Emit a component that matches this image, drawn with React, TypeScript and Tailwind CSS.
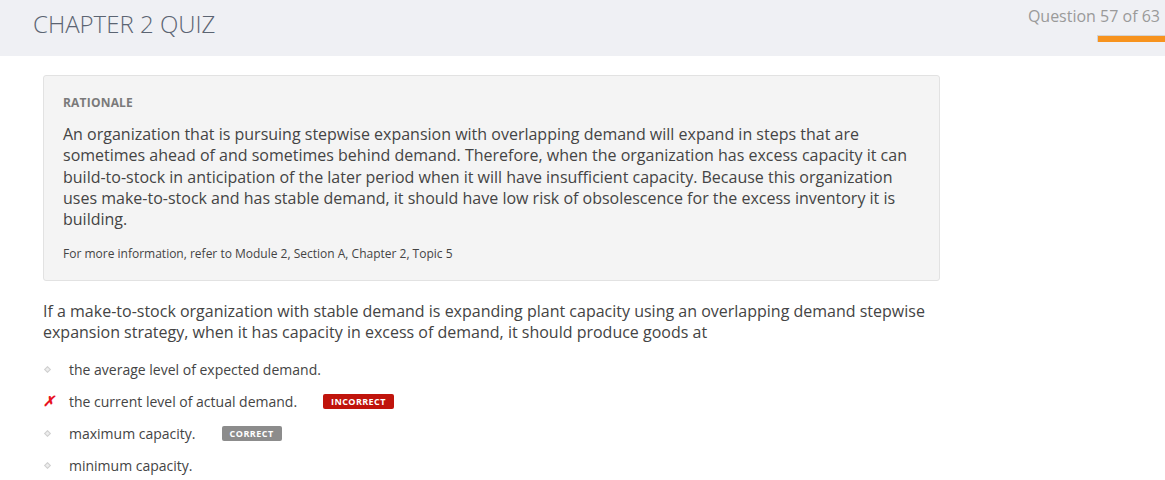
import React from "react";

const options = [
  { text: "the average level of expected demand.", mark: "none" },
  { text: "the current level of actual demand.", mark: "incorrect" },
  { text: "maximum capacity.", mark: "correct" },
  { text: "minimum capacity.", mark: "none" },
];

const App = () => {
  return (
    <div className="w-[1165px] h-[480px] bg-white overflow-hidden font-['Open_Sans',sans-serif]">
      <div className="h-[56px] bg-[#eff0f4] flex justify-between">
        <div className="pl-[33px] pt-[6px] text-[24px] font-light text-[#5b6472]">
          CHAPTER 2 QUIZ
        </div>
        <div className="flex flex-col items-end pt-[4px]">
          <div className="pr-[5px] text-[16px] text-[#9a9a9a]">Question 57 of 63</div>
          <div className="mt-[7px] w-[68px] h-[7px] bg-[#f7931e] border-t border-l border-[#d4d4d4]"></div>
        </div>
      </div>

      <div className="pl-[43px] pt-[19px] w-[940px]">
        <div className="bg-[#f4f4f4] border border-[#e2e2e2] rounded-[3px] px-[19px] pt-[18px] pb-[17px]">
          <div className="text-[12px] font-bold text-[#7a7a7a] tracking-[0.2px]">RATIONALE</div>
          <p className="mt-[12px] text-[16px] leading-[21.3px] text-[#444]">
            An organization that is pursuing stepwise expansion with overlapping demand will expand in steps that are
            sometimes ahead of and sometimes behind demand. Therefore, when the organization has excess capacity it can
            build-to-stock in anticipation of the later period when it will have insufficient capacity. Because this organization
            uses make-to-stock and has stable demand, it should have low risk of obsolescence for the excess inventory it is
            building.
          </p>
          <p className="mt-[15px] text-[12px] text-[#444]">
            For more information, refer to Module 2, Section A, Chapter 2, Topic 5
          </p>
        </div>

        <p className="mt-[20px] text-[16px] leading-[21px] text-[#444] w-[900px]">
          If a make-to-stock organization with stable demand is expanding plant capacity using an overlapping demand stepwise
          expansion strategy, when it has capacity in excess of demand, it should produce goods at
        </p>

        <div className="mt-[10px] flex flex-col">
          {options.map((o, i) => (
            <div key={i} className="h-[32px] flex items-center">
              <div className="w-[26px] flex items-center">
                {o.mark === "incorrect" ? (
                  <span className="text-[#e8141e] text-[14px] font-bold italic leading-none">✗</span>
                ) : (
                  <span className="ml-[2px] w-[5px] h-[5px] rotate-45 border border-[#cfcfcf] bg-[#ededed]"></span>
                )}
              </div>
              <span className="text-[14px] text-[#444]">{o.text}</span>
              {o.mark === "incorrect" && (
                <span className="ml-[26px] h-[15px] px-[8px] flex items-center rounded-[2px] bg-[#c0140c] text-white text-[9px] font-bold tracking-[0.4px]">
                  INCORRECT
                </span>
              )}
              {o.mark === "correct" && (
                <span className="ml-[26px] h-[15px] px-[8px] flex items-center rounded-[2px] bg-[#8c8c8c] text-white text-[9px] font-bold tracking-[0.5px]">
                  CORRECT
                </span>
              )}
            </div>
          ))}
        </div>
      </div>
    </div>
  );
};

export default App;
